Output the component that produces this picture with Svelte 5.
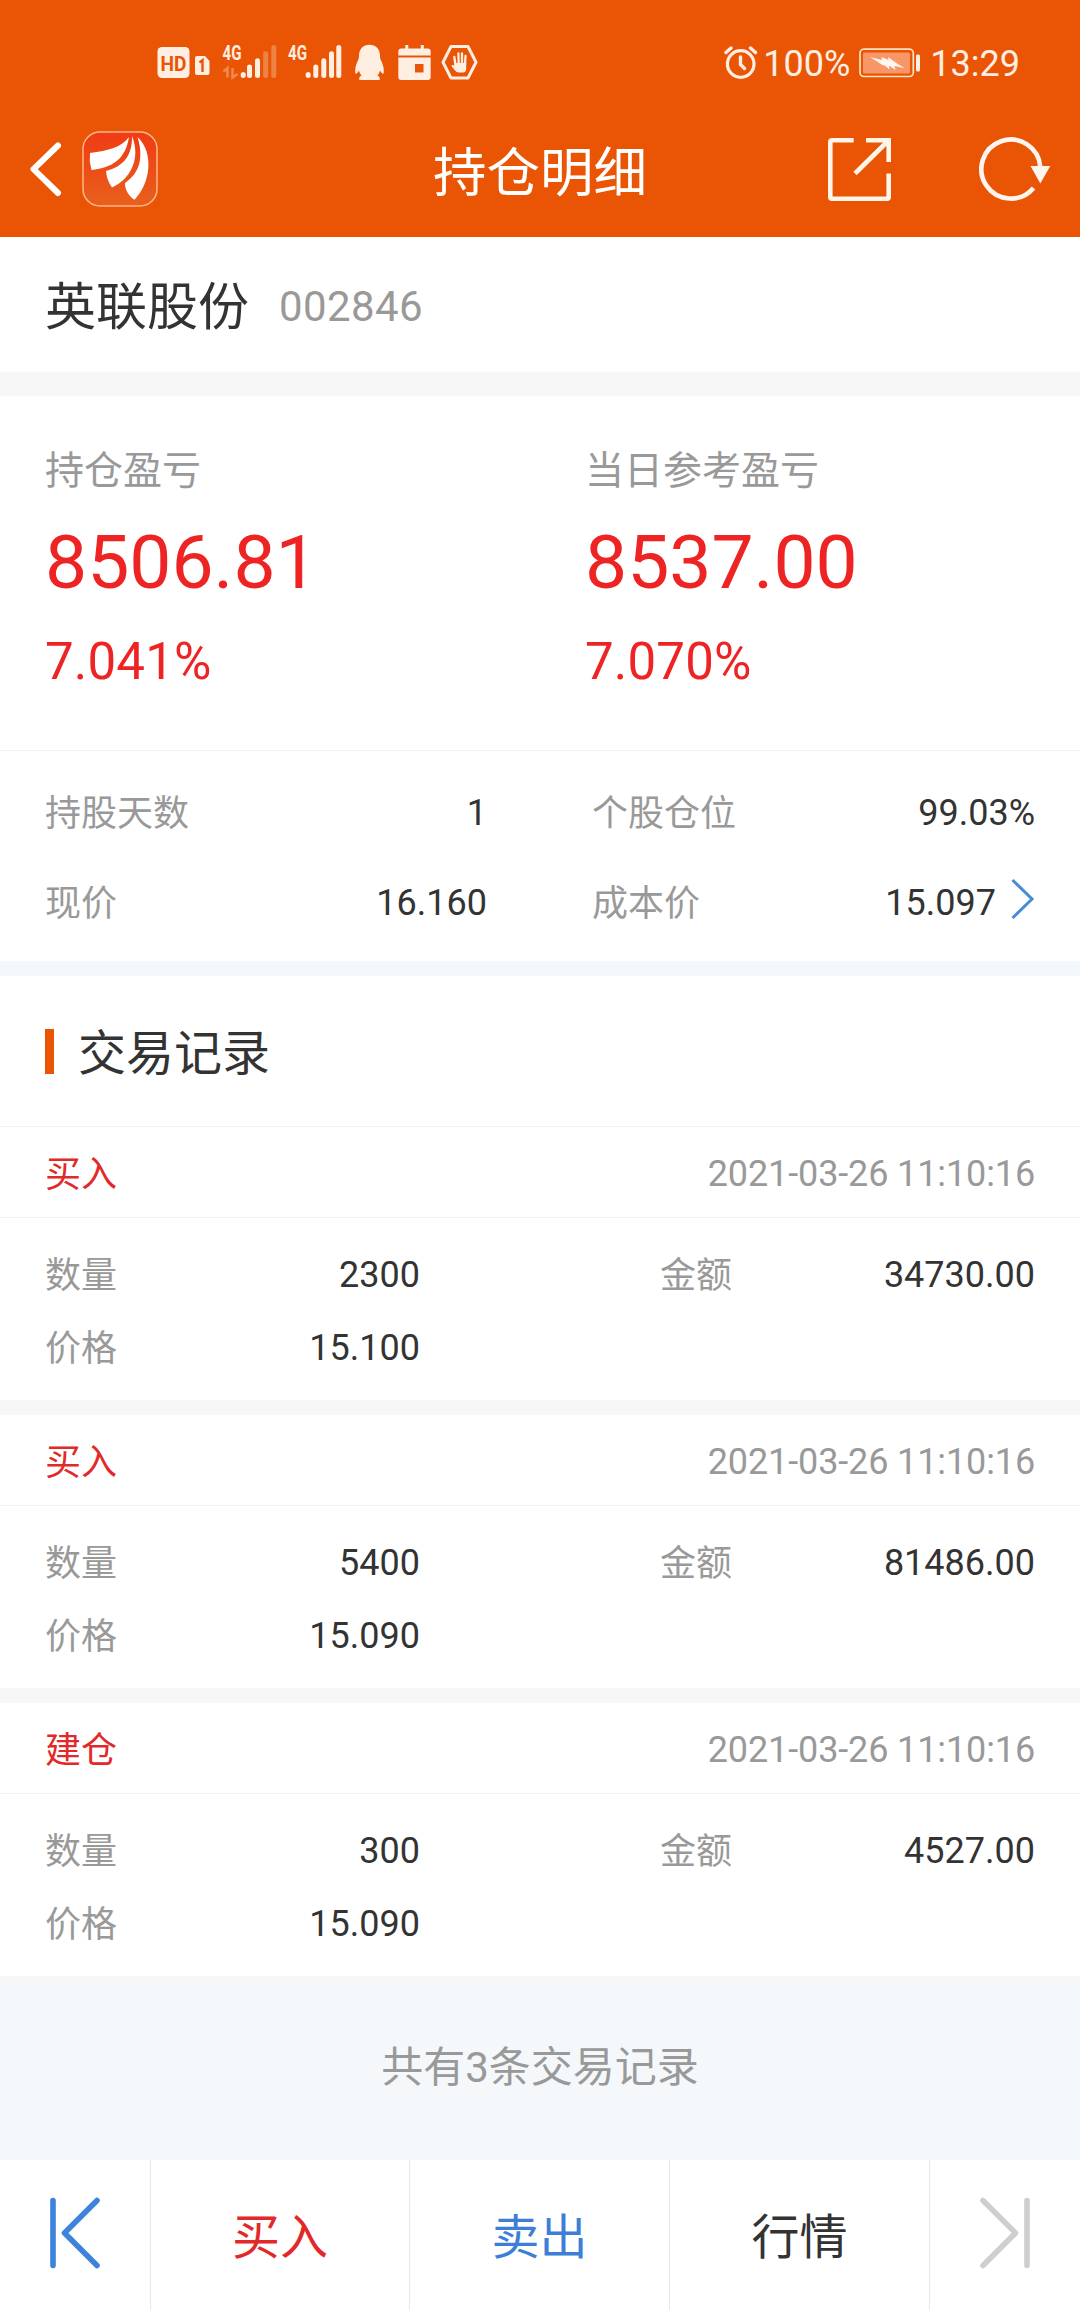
<script lang="ts">
  type Trade = {
    side: string;
    time: string;
    quantity: string;
    amount: string;
    price: string;
  };

  const stock = { name: '英联股份', code: '002846' };

  const profits = [
    { label: '持仓盈亏', value: '8506.81', percent: '7.041%' },
    { label: '当日参考盈亏', value: '8537.00', percent: '7.070%' },
  ];

  const trades: Trade[] = [
    { side: '买入', time: '2021-03-26 11:10:16', quantity: '2300', amount: '34730.00', price: '15.100' },
    { side: '买入', time: '2021-03-26 11:10:16', quantity: '5400', amount: '81486.00', price: '15.090' },
    { side: '建仓', time: '2021-03-26 11:10:16', quantity: '300', amount: '4527.00', price: '15.090' },
  ];
</script>

<div class="page">
  <header class="top">
    <div class="status-bar">
      <div class="status-left">
        <svg width="54" height="50" viewBox="157 38 54 50">
          <rect x="157.5" y="47" width="32" height="31" rx="4.5" fill="#ffeee2" />
          <text x="160.5" y="70.5" font-size="21" font-weight="700" fill="#e95504" textLength="26" lengthAdjust="spacingAndGlyphs">HD</text>
          <path d="M195 58q0-2 2-2h8l4.5 5v12q0 2-2 2H197q-2 0-2-2z" fill="#ffeee2" />
          <path d="M199.5 62.500l3-2.300v11.800" fill="none" stroke="#e95504" stroke-width="2.4" />
        </svg>
        <svg class="signal" width="56" height="60" viewBox="222 33 56 60">
          <text x="222.5" y="59.8" font-size="20.5" font-weight="700" textLength="19" lengthAdjust="spacingAndGlyphs">4G</text>
          <path d="M223.5 71.500l4-3.500v9.500M232.500 68v9.500l5-3.500" fill="none" stroke="#ffeee2" stroke-width="2.5" opacity=".35" />
          <rect x="240.7" y="72" width="5" height="6" rx="2.5" />
          <rect x="247" y="64.5" width="5" height="13.5" rx="2.5" />
          <rect x="255" y="58.3" width="5" height="19.7" rx="2.5" />
          <rect x="263.2" y="51.3" width="5" height="26.7" rx="2.5" opacity=".3" />
          <rect x="271.3" y="45" width="5" height="33" rx="2.5" opacity=".3" />
        </svg>
        <svg class="signal second" width="56" height="60" viewBox="287 33 56 60">
          <text x="288" y="59.8" font-size="20.5" font-weight="700" textLength="19" lengthAdjust="spacingAndGlyphs">4G</text>
          <rect x="305.7" y="72" width="5" height="6" rx="2.5" />
          <rect x="313.3" y="64.5" width="5" height="13.5" rx="2.5" />
          <rect x="321.3" y="58.3" width="5" height="19.7" rx="2.5" />
          <rect x="329" y="51.3" width="5" height="26.7" rx="2.5" />
          <rect x="336.3" y="45" width="5" height="33" rx="2.5" />
        </svg>
        <svg class="penguin" width="30" height="40" viewBox="355 43 30 40">
          <path
            d="M369.500 44.700c-6.500 0-10.500 4.500-10.500 11 0 2-.3 3.500-1.300 5.300-2 4-3 8.500-2.300 12.500.9 1 2.300-.8 3.600-3 .4 2 1.300 3.600 2.600 5-1.800.8-2.800 2-2.300 4.500h20.400c.5-2.500-.5-3.700-2.300-4.500 1.300-1.400 2.200-3 2.600-5 1.300 2.200 2.700 4 3.600 3 .7-4-.3-8.500-2.300-12.500-1-1.800-1.300-3.300-1.300-5.300 0-6.500-4-11-10.500-11z"
            fill="#ffeee2"
          />
        </svg>
        <svg class="calendar" width="33" height="40" viewBox="398 43 33 40">
          <path d="M398.300 55.500v-4q0-3 3-3h4v-3.500h3v3.500h12.500v-3.500h3v3.500h3.900q3 0 3 3v4z" fill="#ffeee2" />
          <path d="M398.300 57.500h32.400v19.500q0 3-3 3h-26.400q-3 0-3-3z" fill="#ffeee2" />
          <rect x="415" y="64" width="8.5" height="8.5" fill="#e95504" />
        </svg>
        <svg class="hand" width="37" height="40" viewBox="441 43 37 40">
          <path d="M451 46.500h17l8 15.800-8 15.700h-17l-8-15.700z" fill="none" stroke="#ffeee2" stroke-width="3" stroke-linejoin="round" />
          <path d="M455.500 65l-1.200-8M458.700 64l-.3-10.500M462 64v-10.500M465 65l.5-9" stroke="#ffeee2" stroke-width="2.3" stroke-linecap="round" />
          <path d="M454.500 63h11.700v5.500q0 4-3.200 4h-4.500q-2 0-3.500-2l-3.500-4.500q0-1.500 1.500-1l1.500 1z" fill="#ffeee2" />
        </svg>
      </div>
      <div class="status-right">
        <svg width="34" height="36" viewBox="725 44 34 36">
          <circle cx="741.7" cy="63" r="13.3" fill="none" stroke="#ffeee2" stroke-width="3.2" />
          <path d="M741.500 56v7.500l4 4M727 51.500l5-4.500M756.500 51.500l-5-4.500" fill="none" stroke="#ffeee2" stroke-width="3.4" stroke-linecap="round" />
        </svg>
        <span class="battery-text">100%</span>
        <svg class="battery" width="62" height="32" viewBox="859 46.5 62 32">
          <rect x="860" y="48.7" width="53.3" height="27.3" rx="4" fill="none" stroke="#ffe2c0" stroke-width="1.7" />
          <rect x="863" y="52" width="47" height="21" rx="1.5" fill="#f79667" />
          <rect x="916" y="54" width="4" height="17" rx="1.5" fill="#ffeee2" />
          <path d="M870 56.500l12 3-.5-3 7 3-.5-3 9 6.500 7.500 4.500-10-2 1 4-6.500-4.500 .5 4-6-5 .5 1.500z" fill="#fff6ee" />
        </svg>
        <span class="clock">13:29</span>
      </div>
    </div>

    <nav class="nav">
      <div class="nav-side">
        <svg width="34" height="60" viewBox="29 139 34 60">
          <path d="M58 145.500L33.500 169.200 58 193" fill="none" stroke="#fff" stroke-width="6" stroke-linecap="round" stroke-linejoin="round" />
        </svg>
        <svg class="logo" width="76" height="76" viewBox="82.5 131.5 76 76">
          <defs>
            <linearGradient id="logo-bg" x1="0" y1="0" x2="0" y2="1">
              <stop offset="0" stop-color="#f03a14" />
              <stop offset="1" stop-color="#e8611c" />
            </linearGradient>
          </defs>
          <rect x="83.5" y="132.5" width="74" height="74" rx="17" fill="url(#logo-bg)" stroke="#ffb48a" stroke-width="1.5" />
          <path d="M129.500 137.500C122 148 109 151 90.500 153.500L90.300 162 92 170.500C113 168 126 160 129.500 137.500z" fill="#fff" />
          <path d="M132.500 136.500C133 156 124 167 106.500 171.500 107 178 109 183 112.500 188 130 180 142 160 132.500 136.500z" fill="#fff" />
          <path d="M138 137.500C144 157 141 173 125.500 183.500 125.500 191 129 196 135 200.300 151 184 155 153 138 137.500z" fill="#fff" />
        </svg>
      </div>
      <h1>持仓明细</h1>
      <div class="nav-side nav-actions">
        <svg width="65" height="65" viewBox="827 137 65 65">
          <g fill="none" stroke="#fff5e8" stroke-width="4.6">
            <path d="M853.700 140.300H832q-1.700 0-1.700 1.700v55q0 1.700 1.700 1.700h55q1.700 0 1.700-1.700V173.500" />
            <path d="M866 140.300h22.700V162M888.500 140.500L855 173.500" />
          </g>
        </svg>
        <svg width="72" height="66" viewBox="979 136 72 66">
          <path d="M1040.300 167A29.500 29.500 0 1 0 1033.500 188" fill="none" stroke="#fff5f0" stroke-width="4.6" />
          <path d="M1030.500 166h19.800L1040.300 183.500z" fill="#fff5f0" />
        </svg>
      </div>
    </nav>
  </header>

  <section class="stock">
    <h2>{stock.name}</h2>
    <span>{stock.code}</span>
  </section>

  <section class="profits">
    {#each profits as item}
      <div class="profit">
        <span class="label">{item.label}</span>
        <strong>{item.value}</strong>
        <em>{item.percent}</em>
      </div>
    {/each}
  </section>

  <section class="details">
    <div class="pair">
      <span class="label">持股天数</span>
      <span>1</span>
    </div>
    <div class="pair">
      <span class="label">个股仓位</span>
      <span>99.03%</span>
    </div>
    <div class="pair">
      <span class="label">现价</span>
      <span>16.160</span>
    </div>
    <div class="pair">
      <span class="label">成本价</span>
      <span class="cost">
        15.097
        <svg width="24" height="42" viewBox="0 0 24 42">
          <path d="M1.500 2L21 21 1.500 40" fill="none" stroke="#4a8ad6" stroke-width="3" />
        </svg>
      </span>
    </div>
  </section>

  <h3 class="section-title"><span>交易记录</span></h3>

  {#each trades as trade}
    <article class="trade">
      <div class="trade-head">
        <span class="side">{trade.side}</span>
        <time>{trade.time}</time>
      </div>
      <div class="trade-body">
        <div class="pair">
          <span class="label">数量</span>
          <span>{trade.quantity}</span>
        </div>
        <div class="pair">
          <span class="label">金额</span>
          <span>{trade.amount}</span>
        </div>
        <div class="pair">
          <span class="label">价格</span>
          <span>{trade.price}</span>
        </div>
      </div>
    </article>
  {/each}

  <p class="summary">共有{trades.length}条交易记录</p>

  <footer class="toolbar">
    <button type="button" aria-label="上一个">
      <svg width="52" height="74" viewBox="0 0 52 74">
        <path d="M4 4.500v65M48 4.500L15.500 37 48 69.500" fill="none" stroke="#3d83dc" stroke-width="5.6" stroke-linecap="round" stroke-linejoin="round" />
      </svg>
    </button>
    <button type="button" class="buy">买入</button>
    <button type="button" class="sell">卖出</button>
    <button type="button">行情</button>
    <button type="button" aria-label="下一个">
      <svg width="52" height="74" viewBox="0 0 52 74">
        <path d="M48 4.500v65M4 4.500L36.500 37 4 69.500" fill="none" stroke="#cecece" stroke-width="5.6" stroke-linecap="round" stroke-linejoin="round" />
      </svg>
    </button>
  </footer>
</div>

<style>
  :global(body) {
    margin: 0;
    background: #f4f8fb;
  }

  .page {
    display: flex;
    flex-direction: column;
    box-sizing: border-box;
    width: 1080px;
    height: 2310px;
    overflow: hidden;
    background: #f4f8fb;
    color: #333333;
    font-family: Roboto, 'Noto Sans CJK SC', sans-serif;
    font-size: 36px;
    line-height: 48px;
  }

  svg {
    display: block;
    flex: none;
  }

  h1,
  h2,
  h3,
  p {
    margin: 0;
    font-weight: 400;
  }

  .top {
    height: 237px;
    background: #e95504;
    color: #ffffff;
  }

  .status-bar {
    display: flex;
    justify-content: space-between;
    align-items: center;
    box-sizing: border-box;
    height: 102px;
    padding: 24px 60px 0 157px;
    color: #ffeee2;
  }

  .status-left,
  .status-right {
    display: flex;
    align-items: center;
  }

  .signal {
    margin-left: 11px;
    fill: #ffeee2;
  }

  .signal.second {
    margin-left: 9px;
  }

  .penguin {
    margin-left: 12px;
  }

  .calendar {
    margin-left: 13px;
  }

  .hand {
    margin-left: 10px;
  }

  .battery-text {
    margin-left: 5px;
    padding-top: 1px;
  }

  .battery {
    margin-left: 9px;
  }

  .clock {
    margin-left: 9px;
    padding-top: 1px;
  }

  .nav {
    display: grid;
    grid-template-columns: 1fr auto 1fr;
    align-items: center;
    box-sizing: border-box;
    height: 135px;
    padding: 0 29px 1px;
  }

  .nav-side {
    display: flex;
    align-items: center;
    gap: 19px;
  }

  .nav-actions {
    justify-content: flex-end;
    gap: 87px;
  }

  h1 {
    padding-top: 10px;
    font-size: 53.5px;
    line-height: 72px;
  }

  .stock {
    display: flex;
    align-items: center;
    gap: 30px;
    box-sizing: border-box;
    height: 159px;
    padding: 4px 45px 0;
    border-bottom: 24px solid #f7f7f7;
    background: #ffffff;
  }

  h2 {
    padding-top: 2px;
    font-size: 51px;
    line-height: 66px;
  }

  .stock span {
    color: #999999;
    font-size: 42px;
    letter-spacing: 0.4px;
  }

  .profits {
    display: grid;
    grid-template-columns: 1fr 1fr;
    box-sizing: border-box;
    height: 355px;
    padding-top: 45px;
    border-bottom: 1px solid #f3f3f3;
    background: #ffffff;
  }

  .profit {
    display: flex;
    flex-direction: column;
    padding-left: 45px;
    color: #ee2424;
  }

  .label {
    color: #999999;
  }

  .profit .label {
    font-size: 39px;
    line-height: 60px;
  }

  .profit strong {
    margin-top: 11px;
    font-size: 75px;
    font-weight: 400;
    line-height: 100px;
  }

  .profit em {
    margin-top: 15px;
    font-size: 51px;
    font-style: normal;
    letter-spacing: 0.2px;
    line-height: 70px;
  }

  .details {
    display: grid;
    grid-template-columns: 442px 443px;
    grid-auto-rows: 90px;
    justify-content: space-between;
    box-sizing: border-box;
    height: 225px;
    padding: 17px 45px 0;
    border-bottom: 15px solid #f4f8fb;
    background: #ffffff;
  }

  .pair {
    display: flex;
    justify-content: space-between;
    align-items: center;
  }

  .pair .label {
    padding-top: 1px;
  }

  .cost {
    display: flex;
    align-items: center;
    gap: 15px;
  }

  .cost svg {
    margin-bottom: 8px;
  }

  .section-title {
    display: flex;
    align-items: center;
    gap: 24px;
    box-sizing: border-box;
    height: 151px;
    padding: 0 45px;
    border-bottom: 1px solid #f3f3f3;
    background: #ffffff;
    font-size: 48px;
    line-height: 66px;
  }

  .section-title::before {
    content: '';
    width: 9px;
    height: 45px;
    background: #e95504;
  }

  .section-title span {
    padding-top: 5px;
  }

  .trade {
    box-sizing: border-box;
    height: 288px;
    border-bottom: 15px solid #f7f7f7;
    background: #ffffff;
  }

  .trade:last-of-type {
    height: 281px;
    border-bottom-width: 8px;
  }

  .trade-head {
    display: flex;
    justify-content: space-between;
    align-items: center;
    box-sizing: border-box;
    height: 91px;
    padding: 3px 45px 0;
    border-bottom: 1px solid #f3f3f3;
  }

  .side {
    padding-top: 2px;
    color: #e22828;
  }

  time {
    color: #999999;
    letter-spacing: -0.12px;
  }

  .trade-body {
    display: grid;
    grid-template-columns: 375px 375px;
    grid-auto-rows: 73px;
    justify-content: space-between;
    padding: 20px 45px 0;
  }

  .trade-body .label {
    padding-top: 3px;
  }

  .summary {
    flex: 1;
    padding-top: 56px;
    color: #999999;
    font-size: 42px;
    line-height: 56px;
    text-align: center;
  }

  .toolbar {
    display: grid;
    grid-template-columns: 151px 259px 260px 260px 150px;
    height: 150px;
    background: #ffffff;
  }

  .toolbar button {
    display: flex;
    justify-content: center;
    align-items: center;
    padding: 6px 0 0;
    border: 0;
    border-right: 1px solid #e8e8e8;
    background: none;
    color: #333333;
    font: inherit;
    font-size: 48px;
  }

  .toolbar button:last-child {
    border-right: 0;
  }

  .toolbar svg {
    margin-top: -11px;
  }

  .toolbar .buy {
    color: #e22828;
  }

  .toolbar .sell {
    color: #3d7fd6;
  }
</style>
